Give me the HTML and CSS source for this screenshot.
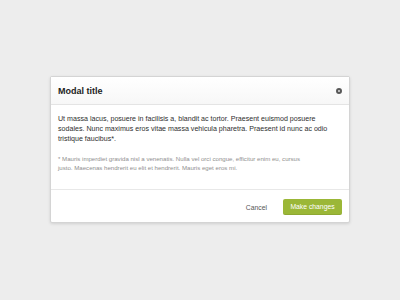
FILE: index.html
```html
<!DOCTYPE html>
<html lang="en">
<head>
    <meta charset="UTF-8">
    <title>Modal</title>
    <link rel="stylesheet" href="styles.css">
</head>
<body>

<div class="page">
    <div class="modal">
        <div class="modal-header">
            <h1 class="modal-title">Modal title</h1>
            <span class="modal-close"></span>
        </div>
        <div class="modal-body">
            <p class="modal-text">
                Ut massa lacus, posuere in facilisis a, blandit ac tortor. Praesent euismod posuere<br>
                sodales. Nunc maximus eros vitae massa vehicula pharetra. Praesent id nunc ac odio<br>
                tristique faucibus*.
            </p>
            <p class="modal-note">
                * Mauris imperdiet gravida nisl a venenatis. Nulla vel orci congue, efficitur enim eu, cursus<br>
                justo. Maecenas hendrerit eu elit et hendrerit. Mauris eget eros mi.
            </p>
        </div>
        <div class="modal-footer">
            <a href="#" class="btn-cancel">Cancel</a>
            <a href="#" class="btn-primary">Make changes</a>
        </div>
    </div>
</div>

</body>
</html>
```

FILE: styles.css
```css
body {
    font-family: 'Liberation Sans', Arial, sans-serif;
    margin: 0;
    padding: 0;
    background-color: #ededed;
    color: #333;
}

.page {
    width: 400px;
    height: 300px;
    padding-top: 76px;
    box-sizing: border-box;
}

.modal {
    width: 300px;
    margin-left: 50px;
    background: #fff;
    border: 1px solid #d4d4d4;
    border-radius: 2px;
    box-shadow: 0 1px 3px rgba(0, 0, 0, 0.12);
    box-sizing: border-box;
}

.modal-header {
    display: flex;
    align-items: center;
    justify-content: space-between;
    height: 27px;
    padding: 0 7px;
    background: linear-gradient(#fff, #f7f7f7);
    border-bottom: 1px solid #e4e4e4;
}

.modal-title {
    margin: 0;
    font-size: 9px;
    font-weight: bold;
    color: #222;
}

.modal-close {
    width: 2px;
    height: 2px;
    border: 2px solid #585858;
    border-radius: 50%;
    background: #ddd;
}

.modal-body {
    padding: 9px 7px 17px;
    border-bottom: 1px solid #e8e8e8;
}

.modal-text {
    margin: 0 0 10px;
    font-size: 7.1px;
    line-height: 10px;
    color: #2e2e2e;
}

.modal-note {
    margin: 0;
    font-size: 6.1px;
    line-height: 9px;
    color: #8f8f8f;
}

.modal-footer {
    display: flex;
    align-items: center;
    justify-content: flex-end;
    gap: 16px;
    padding: 9px 7px 7px;
}

.btn-cancel {
    font-size: 6.8px;
    color: #555;
    text-decoration: none;
}

.btn-primary {
    display: inline-block;
    width: 59px;
    height: 16px;
    line-height: 16px;
    box-sizing: border-box;
    text-align: center;
    font-size: 6.8px;
    color: #fff;
    background: #9bb737;
    border-radius: 2px;
    box-shadow: inset 0 -1px 0 rgba(0, 0, 0, 0.08);
    text-decoration: none;
}
```
